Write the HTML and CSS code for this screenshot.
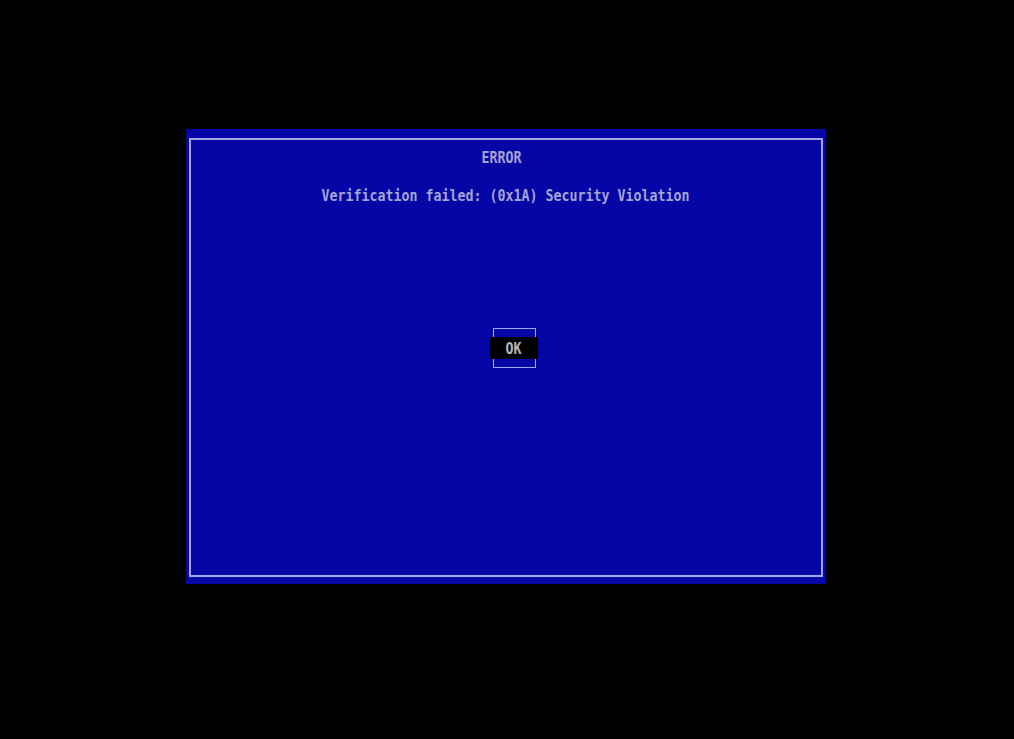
FILE: index.html
```html
<!DOCTYPE html>
<html>
<head>
<meta charset="utf-8">
<link rel="stylesheet" href="styles.css">
</head>
<body>
<div class="panel">
  <div class="frame">
    <div class="title"><span class="t">ERROR</span></div>
    <div class="msg"><span class="t">Verification failed: (0x1A) Security Violation</span></div>
    <div class="btn-row">
      <div class="btn">
        <div class="bar"><span class="t">OK</span></div>
      </div>
    </div>
  </div>
</div>
</body>
</html>
```

FILE: styles.css
```css
html, body {
  margin: 0;
  padding: 0;
  background: #000;
  width: 1014px;
  height: 739px;
  overflow: hidden;
}
body {
  padding-top: 129px;
  box-sizing: border-box;
  font-family: "DejaVu Sans Mono", "Liberation Mono", monospace;
  font-size: 13.3px;
  font-weight: bold;
}
.panel {
  margin-left: 186px;
  width: 640px;
  height: 455px;
  background: #0606a6;
  padding: 9px 3px 7px 3px;
  box-sizing: border-box;
}
.frame {
  height: 100%;
  border: 2px solid #a6a6e6;
  box-sizing: border-box;
  display: flex;
  flex-direction: column;
  align-items: center;
}
.t {
  display: inline-block;
  transform: scaleY(1.25);
  color: #a4a4d0;
  white-space: pre;
}
.title {
  margin-top: 10px;
  height: 16px;
  line-height: 16px;
  padding-right: 9px;
}
.msg {
  margin-top: 22px;
  height: 16px;
  line-height: 16px;
  padding-right: 1px;
}
.btn-row {
  margin-top: 124px;
  padding-left: 17px;
}
.btn {
  position: relative;
  width: 43px;
  height: 40px;
  border: 1px solid #a6a6e6;
  box-sizing: border-box;
}
.bar {
  position: absolute;
  left: -4px;
  top: 8px;
  width: 48px;
  height: 22px;
  background: #000;
  display: flex;
  align-items: center;
  justify-content: center;
  padding-right: 1px;
  box-sizing: border-box;
}
.bar .t {
  color: #b8b8b8;
}
```
